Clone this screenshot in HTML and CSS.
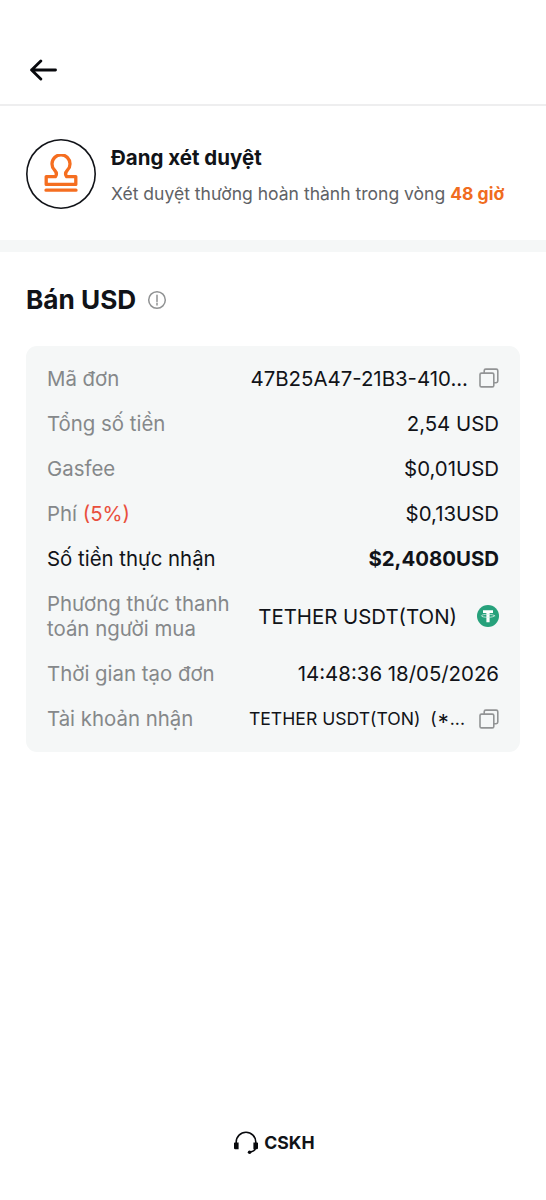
FILE: index.html
```html
<!DOCTYPE html>
<html lang="vi">
<head>
<meta charset="utf-8">
<meta name="viewport" content="width=device-width, initial-scale=1">
<title>Bán USD</title>
<link rel="stylesheet" href="styles.css">
</head>
<body>
<div class="screen">
  <header class="topbar">
    <svg class="back" viewBox="0 0 28 22" aria-label="Quay lại"><path d="M26.5 11H2.6M11.8 2 2.6 11l9.2 9"/></svg>
  </header>
  <section class="status">
    <div class="status-icon">
      <svg class="stamp" viewBox="0 0 34 40"><path d="M2.2 30.4V22.6H11.4C13.2 20.4 12.4 18.2 10.6 16.2A9 9 0 1 1 23.4 16.2C21.6 18.2 20.8 20.4 22.6 22.6H31.8V30.4ZM2 36.2H32"/></svg>
    </div>
    <div class="status-text">
      <h1 class="status-title">Đang xét duyệt</h1>
      <p class="status-note">Xét duyệt thường hoàn thành trong vòng <strong class="hours">48 giờ</strong></p>
    </div>
  </section>
  <main class="order">
    <div class="heading">
      <h2 class="heading-text">Bán USD</h2>
      <svg class="info" viewBox="0 0 20 20"><circle cx="10" cy="10" r="8.3"/><path d="M10 5.2v6.2M10 13.2v1.7"/></svg>
    </div>
    <dl class="card">
      <div class="row"><dt class="label">Mã đơn</dt><dd class="value"><span class="order-id">47B25A47-21B3-410...</span><svg class="copy" viewBox="0 0 20 20"><path d="M5.2 5.1V2.7a1.6 1.6 0 0 1 1.6-1.6H17.2a1.6 1.6 0 0 1 1.6 1.6V13.1a1.6 1.6 0 0 1-1.6 1.6H15"/><rect x="1" y="5.1" width="13.8" height="13.8" rx="1.5"/></svg></dd></div>
      <div class="row"><dt class="label">Tổng số tiền</dt><dd class="value">2,54 USD</dd></div>
      <div class="row"><dt class="label">Gasfee</dt><dd class="value">$0,01USD</dd></div>
      <div class="row"><dt class="label">Phí <span class="percent">(5%)</span></dt><dd class="value">$0,13USD</dd></div>
      <div class="row"><dt class="label label-dark">Số tiền thực nhận</dt><dd class="value total">$2,4080USD</dd></div>
      <div class="row"><dt class="label method-label">Phương thức thanh toán người mua</dt><dd class="value"><span class="method">TETHER USDT(TON)</span><svg class="coin" viewBox="0 0 22 22"><circle class="coin-bg" cx="11" cy="11" r="11"/><path class="coin-t" d="M6 5.2H16V7.9H12.6V17.2H9.4V7.9H6Z"/><ellipse class="coin-ring" cx="11" cy="10.8" rx="6.6" ry="1.5"/></svg></dd></div>
      <div class="row"><dt class="label">Thời gian tạo đơn</dt><dd class="value date">14:48:36 18/05/2026</dd></div>
      <div class="row"><dt class="label">Tài khoản nhận</dt><dd class="value"><span class="account">TETHER USDT(TON)&nbsp; (<span class="mask">*</span>...</span><svg class="copy" viewBox="0 0 20 20"><path d="M5.2 5.1V2.7a1.6 1.6 0 0 1 1.6-1.6H17.2a1.6 1.6 0 0 1 1.6 1.6V13.1a1.6 1.6 0 0 1-1.6 1.6H15"/><rect x="1" y="5.1" width="13.8" height="13.8" rx="1.5"/></svg></dd></div>
    </dl>
  </main>
  <footer class="support">
    <svg class="headset" viewBox="0 0 26 24"><path class="headset-line" d="M3.2 12V11a9.8 9.8 0 0 1 19.6 0v1M22.5 16c0 3.2-2.2 4.8-5.6 5"/><path d="M1.8 11.4H5.6V18.2H2.2Q1 18.2 1 17V12.2Q1 11.4 1.8 11.4ZM20.4 11.4H24.2Q25 11.4 25 12.2V17Q25 18.2 23.8 18.2H20.4Z"/><circle cx="16.6" cy="21.2" r="1.8"/></svg>
    <span>CSKH</span>
  </footer>
</div>
</body>
</html>
```
FILE: styles.css
```css
* { box-sizing: border-box; }
body {
  margin: 0;
  background: #fff;
  color: #111318;
  font-family: Inter, "Noto Sans", sans-serif;
}
h1, h2, p, dl, dd { margin: 0; }
svg { display: block; flex: none; fill: none; stroke-linecap: round; stroke-linejoin: round; }
.screen { height: 1200px; display: flex; flex-direction: column; }
.topbar {
  height: 106px;
  padding: 59px 0 0 29px;
  border-bottom: 2px solid #eeeeef;
}
.back { width: 28px; height: 22px; stroke: #08090d; stroke-width: 2.9; }
.status {
  height: 146px;
  padding: 32.5px 26px 0;
  display: flex;
  gap: 15px;
  border-bottom: 12px solid #f5f7f7;
}
.status-icon {
  width: 70px;
  height: 70px;
  flex: none;
  border-radius: 50%;
  box-shadow: inset 0 0 0 1.6px #111318;
  display: flex;
  align-items: center;
  justify-content: center;
}
.stamp { width: 34px; height: 40px; stroke: #f56e20; stroke-width: 3.3; }
.status-text { padding-top: 6.5px; }
.status-title { font-size: 20.5px; line-height: 26px; font-weight: 700; }
.status-note { margin-top: 11px; color: #606266; font-size: 17.55px; line-height: 24px; white-space: nowrap; }
.hours { color: #f06c20; font-weight: 700; }
.order { flex: 1; padding: 30px 26px 0; }
.heading { display: flex; align-items: center; gap: 11px; height: 36px; }
.heading-text { font-size: 26.2px; line-height: 36px; font-weight: 700; }
.info { width: 20px; height: 20px; stroke: #919394; stroke-width: 1.5; }
.card {
  margin-top: 27.5px;
  padding: 21px 21px 20px;
  border-radius: 11px;
  background: #f5f7f7;
  display: flex;
  flex-direction: column;
  gap: 20.6px;
  font-size: 20.4px;
  line-height: 24.6px;
  white-space: nowrap;
}
.row { display: flex; justify-content: space-between; align-items: center; }
.label { color: #85888a; }
.label-dark { color: #111318; }
.percent { color: #e94f3d; }
.method-label { width: 190px; white-space: normal; }
.value { display: flex; align-items: center; }
.total { font-weight: 700; }
.order-id { margin-right: 11px; }
.method { margin-right: 20px; }
.account { margin-right: 14px; font-size: 17.6px; }
.mask { margin: 0 1px; font-size: 1.25em; line-height: 0; vertical-align: -0.22em; }
.copy { width: 20px; height: 20px; margin: -2px 0 0; stroke: #929495; stroke-width: 1.6; }
.coin { width: 22px; height: 22px; margin-top: -3px; }
.coin-bg { fill: #26a17b; }
.coin-t { fill: #fff; }
.coin-ring { stroke: #d9f0e8; stroke-width: 0.8; }
.support {
  height: 83px;
  padding-top: 14px;
  display: flex;
  justify-content: center;
  gap: 5px;
  font-size: 17.6px;
  line-height: 24px;
  font-weight: 700;
  padding-left: 2px;
}
.headset { width: 26px; height: 24px; fill: #08090d; }
.headset-line { fill: none; stroke: #08090d; stroke-width: 1.6; }
```
